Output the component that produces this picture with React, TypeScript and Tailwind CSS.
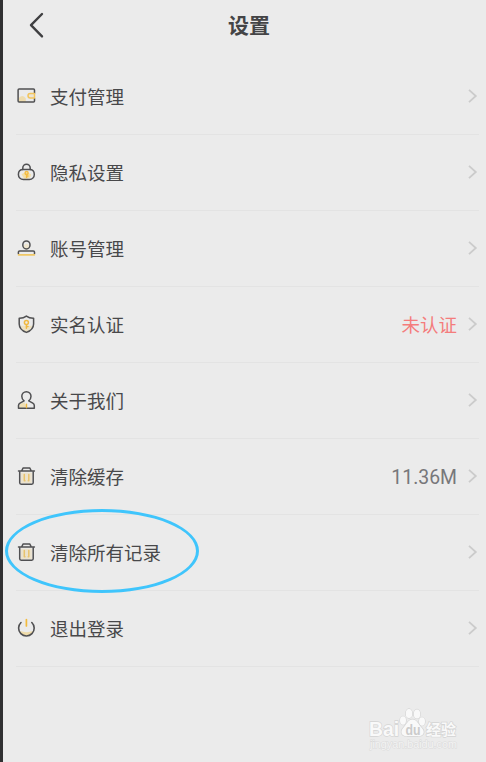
import type { ReactNode } from "react";

function Icon({ children }: { children: ReactNode }) {
  return (
    <svg
      className="mb-px h-5 w-5 shrink-0 overflow-visible"
      viewBox="0 -0.7 20 20"
      fill="none"
      stroke="#505052"
      strokeWidth="1.5"
      strokeLinecap="round"
      strokeLinejoin="round"
    >
      {children}
    </svg>
  );
}

const Wallet = () => (
  <Icon>
    <path d="M3 15.2V11Q6.5 7.5 9.8 11.5V15.2Z" fill="#eedcae" stroke="none" />
    <path d="M18.5 6.6V3.4Q18.5 2.4 17.5 2.4H3.1Q2.1 2.4 2.1 3.4V14.4Q2.1 15.4 3.1 15.4H17.5Q18.5 15.4 18.5 14.4V11.8" />
    <path d="M18.5 6.9H14.2a2.2 2.2 0 0 0 0 4.4H18.5Z" fill="#ebe5d6" stroke="#f2c45c" />
  </Icon>
);

const Lock = () => (
  <Icon>
    <path d="M5.5 11.5Q10 8 15 11.5Q15 15 12 15.7H8Z" fill="#f3dfa8" stroke="none" />
    <path d="M6.8 6.8V5.2a3.7 3.7 0 0 1 7.4 0V6.8" />
    <path d="M7.2 6.9H13.6C16.5 6.9 18.3 9 18.3 11.8S16.2 16.7 13.4 16.7H7.4C4.4 16.7 2.4 14.6 2.4 11.8S4.2 6.9 7.2 6.9Z" />
    <circle cx="10.6" cy="10.2" r="1.5" stroke="#f3bd45" />
    <path d="M10.6 11.7V14.7M10.8 13.3H12" stroke="#f3bd45" />
  </Icon>
);

const Account = () => (
  <Icon>
    <circle cx="10.4" cy="8" r="2.6" fill="#efe6cf" stroke="none" />
    <ellipse cx="10.4" cy="6.2" rx="3.6" ry="4" />
    <path d="M2.4 15V13.4Q2.4 12.2 3.6 12.2H17.3Q18.5 12.2 18.5 13.4V15" />
    <path d="M2.6 16.1H18.3" stroke="#efc766" strokeWidth="1.8" />
  </Icon>
);

const Shield = () => (
  <Icon>
    <path d="M4.2 11H16.5Q14.5 15.6 10.5 17.2Q6 15.4 4.2 11Z" fill="#ede1c2" stroke="none" />
    <path d="M10.4 1.4Q13.4 3.6 17.6 3.5V9.3Q17.5 15.2 10.4 17.7Q3.3 15.2 3.2 9.3V3.5Q7.4 3.6 10.4 1.4Z" />
    <circle cx="10.4" cy="7.9" r="2" stroke="#f1b941" />
    <path d="M10.4 10V13.6M10.6 11.9H12" stroke="#f1b941" />
  </Icon>
);

const Person = () => (
  <Icon>
    <path d="M4 13.4L8.5 11.6L11 17H3.4Z" fill="#efdfb4" stroke="none" />
    <path d="M8.1 10.2Q5.8 8.5 5.8 5.6A4.6 4.6 0 0 1 15 5.6Q15 8.5 12.7 10.2L16.8 12.4Q18.3 13.2 18.3 14.8V17.5H2.5V14.8Q2.5 13.2 4 12.4Z" />
    <path d="M10.5 13.4V17" stroke="#edb63e" strokeWidth="1.4" />
  </Icon>
);

const Trash = () => (
  <Icon>
    <rect x="5" y="6" width="10.8" height="10.6" fill="#ebe2cd" stroke="none" />
    <path d="M2.5 4.3H18.4M5.8 3.8L7.2 1.2H13.7L15.1 3.8" />
    <path d="M3.7 5V16.1Q3.7 17.5 5.1 17.5H15.8Q17.2 17.5 17.2 16.1V5" />
    <path d="M8.3 7.8V14H9M12.8 7.8V14H12.2" stroke="#e8c36d" />
  </Icon>
);

const Power = () => (
  <Icon>
    <path d="M4 12.4Q10.5 14.6 17 12.4Q15 16.8 10.5 16.9Q6 16.8 4 12.4Z" fill="#eedbaa" stroke="none" />
    <path d="M5 3.8A7.8 7.8 0 1 0 15.8 3.8" strokeWidth="1.6" />
    <path d="M10.4 1V7.2" stroke="#f3bb3c" strokeWidth="1.7" />
  </Icon>
);

const rows = [
  { label: "支付管理", icon: <Wallet /> },
  { label: "隐私设置", icon: <Lock /> },
  { label: "账号管理", icon: <Account /> },
  { label: "实名认证", icon: <Shield />, value: "未认证", valueClass: "pt-[5px] text-[18.5px] text-[#f47c7c]" },
  { label: "关于我们", icon: <Person /> },
  { label: "清除缓存", icon: <Trash />, value: "11.36M", valueClass: "pt-0.5 text-[19.4px] text-[#77777a]" },
  { label: "清除所有记录", icon: <Trash />, marked: true },
  { label: "退出登录", icon: <Power /> },
];

function Watermark() {
  return (
    <div className="absolute top-[705px] left-[363px] h-[48px] w-[96px]">
      <svg
        className="h-full w-full"
        viewBox="0 0 96 48"
        fill="#f9f9f9"
        stroke="#d4d4d4"
        strokeWidth="1.3"
        paintOrder="stroke"
      >
        <text x="3" y="31" fontSize="20" fontWeight="700" fontFamily="'Liberation Sans', sans-serif" textLength="30" lengthAdjust="spacingAndGlyphs">Bai</text>
        <ellipse cx="37" cy="15.5" rx="3" ry="4.2" />
        <ellipse cx="43" cy="8.5" rx="3.2" ry="4.6" />
        <ellipse cx="51" cy="9" rx="3.2" ry="4.6" />
        <ellipse cx="56" cy="16.5" rx="3" ry="4.2" />
        <path d="M46.5 14.5C51 14.5 52 19 55 22C61 28 56 32 51 31H42C36 32 33 27 38 22C41 19 42 14.5 46.5 14.5Z" />
        <text x="39.5" y="29.5" fontSize="14" fontWeight="700" fontFamily="'Liberation Sans', sans-serif" fill="#cbcbcb" stroke="none" textLength="15" lengthAdjust="spacingAndGlyphs">du</text>
        <text x="60" y="30" fontSize="15" fontWeight="700" fontFamily="'Noto Sans CJK SC', sans-serif" textLength="30" lengthAdjust="spacingAndGlyphs">经验</text>
        <text x="4" y="43" fontSize="10" fontFamily="'Liberation Sans', sans-serif" fill="#f4f4f4" stroke="#dadada" strokeWidth="0.9" textLength="87" lengthAdjust="spacingAndGlyphs">jingyan.baidu.com</text>
      </svg>
    </div>
  );
}

export default function App() {
  return (
    <main className="relative h-[762px] w-[486px] overflow-hidden border-l-[3px] border-[#303032] bg-[#ebebeb] font-['Roboto','Noto_Sans_CJK_SC',sans-serif] text-[#48484a]">
      <header className="flex h-[59px] items-start">
        <svg className="mt-3 ml-6 h-[27px] w-5" viewBox="0 0 20 27" fill="none" stroke="#3f3f41" strokeWidth="2.4" strokeLinecap="round" strokeLinejoin="round">
          <path d="M15 2L4 13.2L15 24.4" />
        </svg>
        <h1 className="mt-[11px] ml-[181px] text-[21px] leading-[31px] font-bold text-[#444446]">设置</h1>
      </header>
      <ul className="ml-[13px]">
        {rows.map((row) => (
          <li key={row.label} className="relative mr-[7px] flex h-[76px] items-center border-b border-[#e3e3e3]">
            {row.icon}
            <span className="mt-[3px] ml-[14px] text-[18.5px] leading-7">{row.label}</span>
            <span className={`ml-auto ${row.valueClass ?? ""}`}>{row.value}</span>
            <svg className="mr-px mb-px ml-[10px] h-4 w-[11px]" viewBox="0 0 11 16" fill="none" stroke="#cbcbcb" strokeWidth="1.8">
              <path d="M2 1.8L8.8 8L2 14.2" />
            </svg>
            {row.marked && (
              <span className="absolute top-[-6px] left-[-11px] h-[84px] w-[194px] rounded-[50%] border-[3px] border-[#3fc5fc]" />
            )}
          </li>
        ))}
      </ul>
      <Watermark />
    </main>
  );
}
